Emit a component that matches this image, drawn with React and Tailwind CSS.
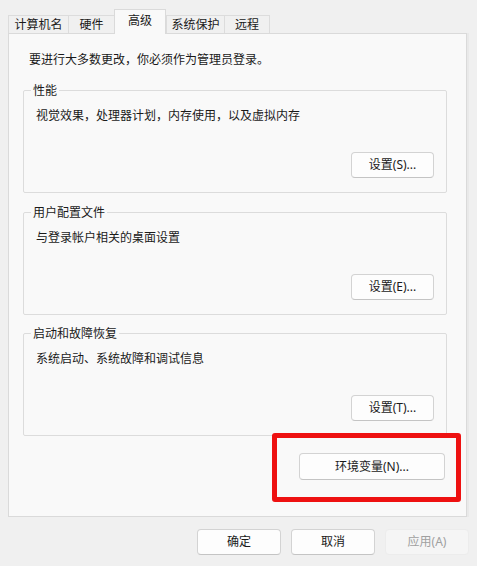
import React from "react";

const tabs = [
  { label: "计算机名", w: "w-[60px]" },
  { label: "硬件", w: "w-[46px]" },
  { label: "高级", w: "w-[52px]", active: true },
  { label: "系统保护", w: "w-[58px]" },
  { label: "远程", w: "w-[46px]" },
];

const groups = [
  { title: "性能", desc: "视觉效果，处理器计划，内存使用，以及虚拟内存", btn: "设置(S)...", mt: "mt-[22px]" },
  { title: "用户配置文件", desc: "与登录帐户相关的桌面设置", btn: "设置(E)...", mt: "mt-[19px]" },
  { title: "启动和故障恢复", desc: "系统启动、系统故障和调试信息", btn: "设置(T)...", mt: "mt-[18px]" },
];

function WinButton({ children, className = "", disabled = false }) {
  return (
    <button
      type="button"
      className={
        "flex items-center justify-center rounded-[4px] border " +
        (disabled
          ? "bg-[#f5f5f5] border-[#ececec] text-[#a0a0a0] "
          : "bg-[#fdfdfd] border-[#d3d3d3] border-b-[#c4c4c4] text-[#1a1a1a] ") +
        className
      }
    >
      {children}
    </button>
  );
}

function GroupBox({ title, desc, btn, mt }) {
  return (
    <div className={"relative ml-[14px] w-[424px] h-[103px] border border-[#dcdcdc] rounded-[2px] flex flex-col pt-[17px] pl-[12px] " + mt}>
      <span className="absolute left-[7px] top-[-8px] px-[2px] bg-[#f9f9f9]">{title}</span>
      <div>{desc}</div>
      <WinButton className="mt-auto self-end mr-[12px] mb-[14px] w-[83px] h-[26px]">{btn}</WinButton>
    </div>
  );
}

export default function App() {
  return (
    <div className="relative w-[477px] h-[566px] bg-[#f0f0f0] text-[12px] leading-[16px] text-[#1a1a1a] font-['Noto_Sans','Noto_Sans_CJK_SC',sans-serif] overflow-hidden">
      {/* Tabs */}
      <div className="flex items-end h-[33px] pl-[8px]">
        {tabs.map((t, i) =>
          t.active ? (
            <div
              key={t.label}
              className={"relative z-10 h-[25px] mb-[-1px] pb-[3px] flex items-center justify-center bg-[#f9f9f9] border-t border-l border-r border-[#dadada] " + t.w}
            >
              {t.label}
            </div>
          ) : (
            <div
              key={t.label}
              className={
                "h-[18px] flex items-center justify-center border-t border-l border-[#dcdcdc] bg-[#f0f0f0] " +
                (i === tabs.length - 1 ? "border-r " : "") +
                t.w
              }
            >
              {t.label}
            </div>
          )
        )}
      </div>

      {/* Panel */}
      <div className="ml-[8px] w-[459px] h-[484px] border border-[#dadada] bg-[#f9f9f9] flex flex-col shadow-[2px_0_0_#e9e9e9]">
        <div className="pt-[18px] pl-[20px]">要进行大多数更改，你必须作为管理员登录。</div>
        {groups.map((g) => (
          <GroupBox key={g.title} {...g} />
        ))}
        <WinButton className="mt-[17px] self-end mr-[21px] w-[146px] h-[27px]">环境变量(N)...</WinButton>
      </div>

      {/* Dialog buttons */}
      <div className="flex justify-end gap-[10px] pr-[8px] mt-[12px]">
        <WinButton className="w-[84px] h-[26px]">确定</WinButton>
        <WinButton className="w-[84px] h-[26px]">取消</WinButton>
        <WinButton disabled className="w-[84px] h-[26px]">应用(A)</WinButton>
      </div>

      {/* Red highlight */}
      <div className="absolute left-[272px] top-[433px] w-[189px] h-[69px] border-[5px] border-[#ee1111] rounded-[3px] pointer-events-none" />
    </div>
  );
}
